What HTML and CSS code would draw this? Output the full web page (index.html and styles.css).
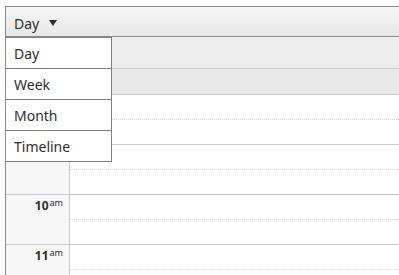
FILE: index.html
```html
<!DOCTYPE html>
<html lang="en">
<head>
<meta charset="utf-8">
<title>Scheduler</title>
<link rel="stylesheet" href="styles.css">
</head>
<body>
<div class="scheduler">
  <div class="toolbar">
    <div class="view-btn">
      <span class="view-label">Day</span>
      <svg class="caret" width="8" height="6" viewBox="0 0 8 6" aria-hidden="true"><path d="M0 0H8L4 6Z" fill="#2e2e2e"/></svg>
    </div>
  </div>
  <div class="header">
    <div class="head-row">
      <div class="time-cell"></div>
      <div class="day-cell"></div>
    </div>
    <div class="allday-row">
      <div class="time-cell"></div>
      <div class="day-cell"></div>
    </div>
  </div>
  <div class="content">
    <div class="hour">
      <div class="time-label"></div>
      <div class="slots"><div class="slot half"></div><div class="slot"></div></div>
    </div>
    <div class="hour">
      <div class="time-label"></div>
      <div class="slots"><div class="slot half"></div><div class="slot"></div></div>
    </div>
    <div class="hour">
      <div class="time-label">10<sup>am</sup></div>
      <div class="slots"><div class="slot half"></div><div class="slot"></div></div>
    </div>
    <div class="hour">
      <div class="time-label">11<sup>am</sup></div>
      <div class="slots"><div class="slot half"></div><div class="slot"></div></div>
    </div>
  </div>
  <ul class="view-menu">
    <li>Day</li>
    <li>Week</li>
    <li>Month</li>
    <li>Timeline</li>
  </ul>
</div>
</body>
</html>
```

FILE: styles.css
```css
html, body {
  margin: 0;
  padding: 0;
  background: #ffffff;
  overflow: hidden;
}

body {
  font-family: "Noto Sans", "Open Sans", sans-serif;
  color: #2e2e2e;
  width: 399px;
  height: 275px;
}

.scheduler {
  position: relative;
  margin: 6px 0 0 5px;
  width: 393px;
  height: 268px;
  overflow: hidden;
  border-top: 1px solid #8a8a8a;
  border-left: 1px solid #8a8a8a;
  background: #ffffff;
}

.toolbar {
  height: 29px;
  border-bottom: 1px solid #8a8a8a;
  background: linear-gradient(#f6f6f6, #e7e7e7);
}

.view-btn {
  display: flex;
  align-items: flex-start;
  padding-left: 8px;
  height: 29px;
}

.view-label {
  font-size: 14px;
  line-height: 25px;
  padding-top: 4px;
}

.caret {
  margin-top: 13px;
  margin-left: 10px;
}

.head-row,
.allday-row {
  display: grid;
  grid-template-columns: 64px 1fr;
  border-bottom: 1px solid #c8c8c8;
}

.head-row {
  height: 31px;
  background: #ececec;
}

.allday-row {
  height: 25px;
  background: #e8e8e8;
}

.head-row .time-cell,
.allday-row .time-cell {
  border-right: 1px solid #c8c8c8;
}

.hour {
  display: grid;
  grid-template-columns: 64px 1fr;
  border-bottom: 1px solid #c9c9d1;
}

.time-label {
  background: #f6f6f6;
  border-right: 1px solid #c9c9d1;
  text-align: right;
  padding: 3px 6px 0 0;
  font-size: 12px;
  line-height: 16px;
  font-weight: bold;
  color: #2e2e2e;
}

.time-label sup {
  font-size: 9px;
  font-weight: normal;
  vertical-align: 4px;
  line-height: 0;
  margin-left: 1px;
}

.slot {
  height: 24px;
}

.slot.half {
  border-bottom: 1px dotted #d6d6d6;
}

.view-menu {
  position: absolute;
  left: -1px;
  top: 30px;
  width: 105px;
  margin: 0;
  padding: 0;
  list-style: none;
  background: #ffffff;
  border: 1px solid #7f7f7f;
}

.view-menu li {
  height: 29px;
  padding-top: 1px;
  line-height: 30px;
  padding-left: 8px;
  font-size: 14px;
  color: #2e2e2e;
}

.view-menu li + li {
  border-top: 1px solid #7f7f7f;
}
```
